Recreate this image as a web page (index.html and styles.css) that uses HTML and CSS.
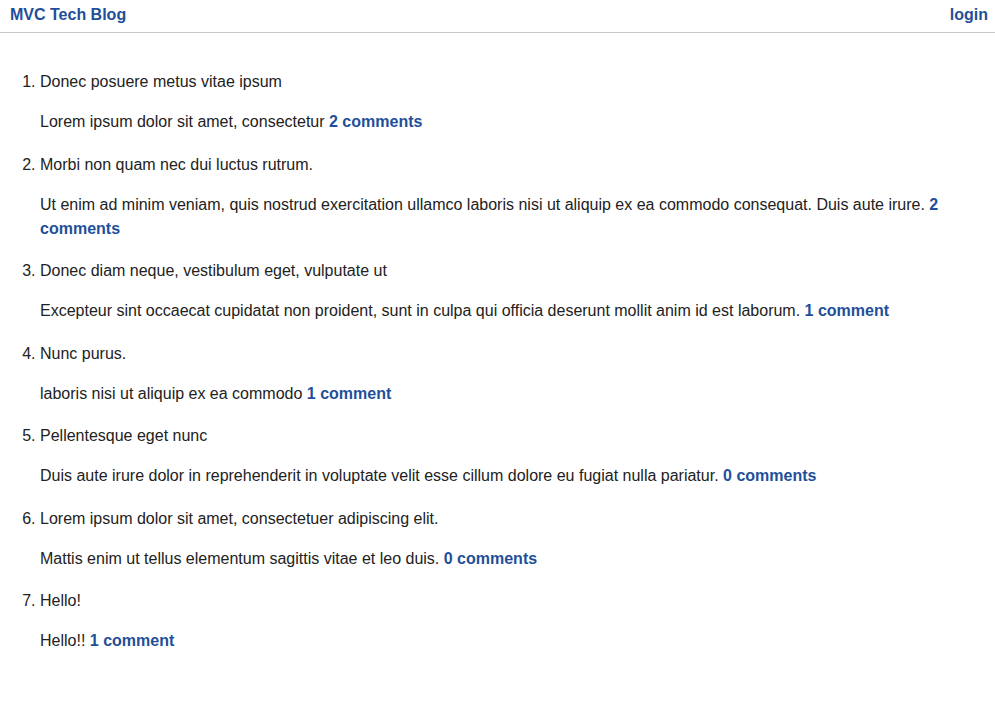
FILE: index.html
```html
<!DOCTYPE html>
<html>
<head>
<meta charset="utf-8">
<link rel="stylesheet" href="styles.css">
</head>
<body>
<header class="topbar">
  <a class="brand" href="#">MVC Tech Blog</a>
  <a class="login" href="#">login</a>
</header>
<main class="content">
  <ol class="posts">
    <li class="post">
      <p class="title">Donec posuere metus vitae ipsum</p>
      <p class="body">Lorem ipsum dolor sit amet, consectetur <a class="comments" href="#">2 comments</a></p>
    </li>
    <li class="post">
      <p class="title">Morbi non quam nec dui luctus rutrum.</p>
      <p class="body">Ut enim ad minim veniam, quis nostrud exercitation ullamco laboris nisi ut aliquip ex ea commodo consequat. Duis aute irure. <a class="comments" href="#">2 comments</a></p>
    </li>
    <li class="post">
      <p class="title">Donec diam neque, vestibulum eget, vulputate ut</p>
      <p class="body">Excepteur sint occaecat cupidatat non proident, sunt in culpa qui officia deserunt mollit anim id est laborum. <a class="comments" href="#">1 comment</a></p>
    </li>
    <li class="post">
      <p class="title">Nunc purus.</p>
      <p class="body">laboris nisi ut aliquip ex ea commodo <a class="comments" href="#">1 comment</a></p>
    </li>
    <li class="post">
      <p class="title">Pellentesque eget nunc</p>
      <p class="body">Duis aute irure dolor in reprehenderit in voluptate velit esse cillum dolore eu fugiat nulla pariatur. <a class="comments" href="#">0 comments</a></p>
    </li>
    <li class="post">
      <p class="title">Lorem ipsum dolor sit amet, consectetuer adipiscing elit.</p>
      <p class="body">Mattis enim ut tellus elementum sagittis vitae et leo duis. <a class="comments" href="#">0 comments</a></p>
    </li>
    <li class="post">
      <p class="title">Hello!</p>
      <p class="body">Hello!! <a class="comments" href="#">1 comment</a></p>
    </li>
  </ol>
</main>
</body>
</html>
```
FILE: styles.css
```css
html, body {
  margin: 0;
  padding: 0;
  background: #fff;
}
body {
  font-family: "Liberation Sans", Arial, Helvetica, sans-serif;
  font-size: 16px;
  line-height: 24px;
  color: #222;
}
a {
  color: #1f4f99;
  font-weight: bold;
  text-decoration: none;
}
.topbar {
  display: flex;
  justify-content: space-between;
  align-items: center;
  height: 33px;
  box-sizing: border-box;
  padding: 0 7px 2px 10px;
  border-bottom: 1px solid #c8c8c8;
}
.content {
  padding-top: 37px;
}
.posts {
  margin: 0;
  padding-left: 40px;
  padding-right: 40px;
}
.post {
  margin-bottom: 18.5px;
}
.post p {
  margin: 0;
}
.post .title {
  margin-bottom: 16px;
}
```
